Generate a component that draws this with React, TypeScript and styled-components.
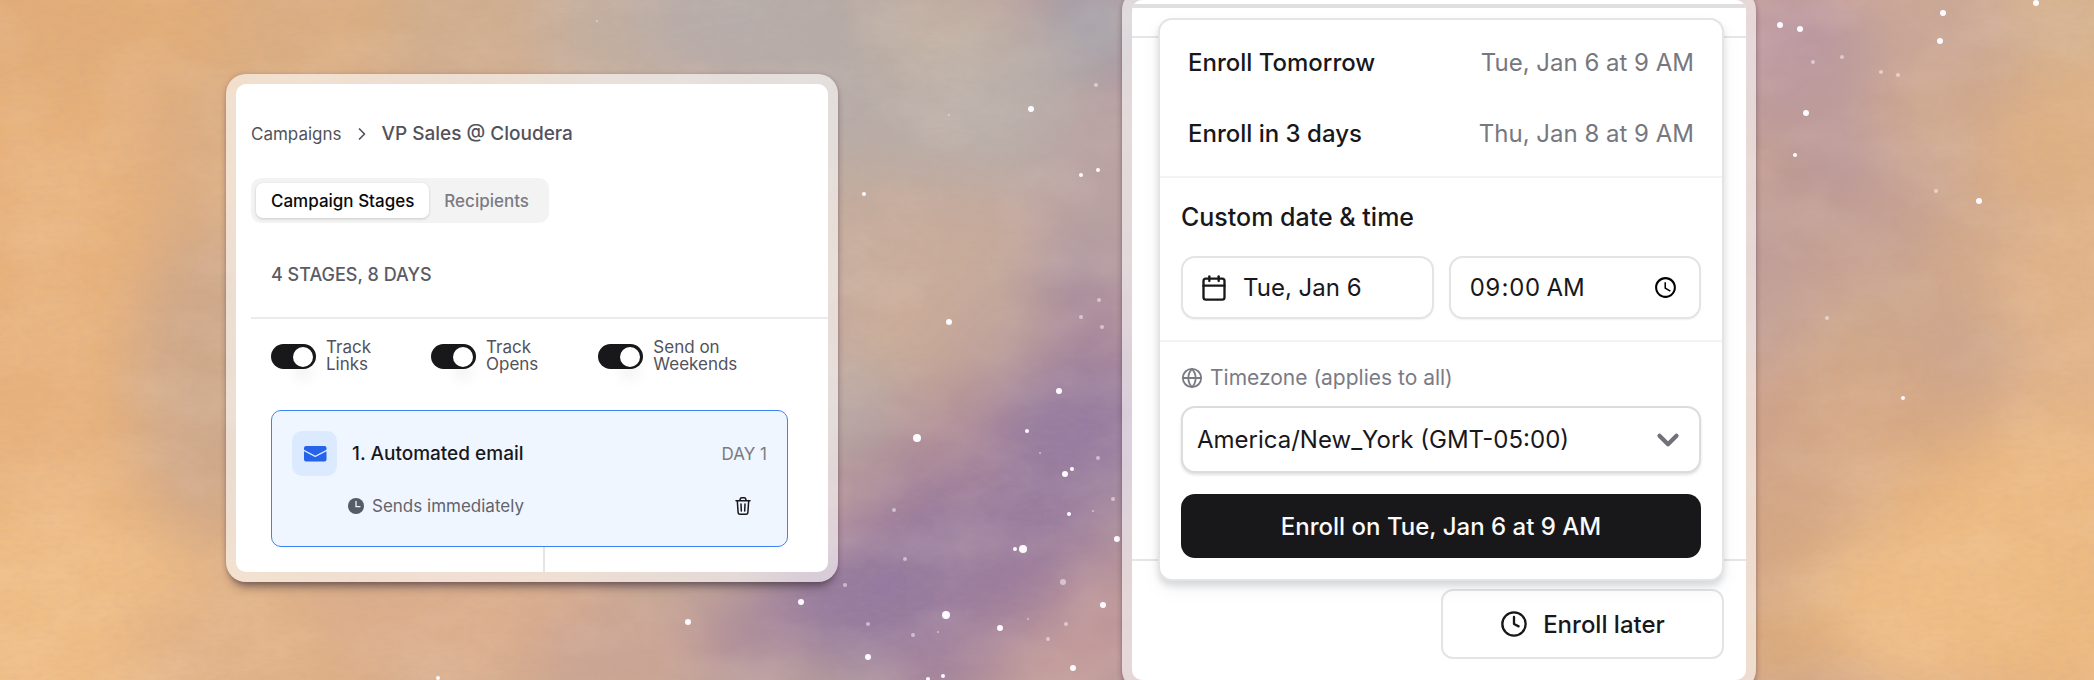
import React from 'react';
import styled, { createGlobalStyle } from 'styled-components';
import { Calendar, ChevronDown, ChevronRight, Clock, Globe } from 'lucide-react';

const GlobalStyle = createGlobalStyle`
  *, *::before, *::after { box-sizing: border-box; }
  body {
    margin: 0;
    font-family: Inter, "Liberation Sans", sans-serif;
    color: #18181b;
    background: #d9ad88;
  }
  button, input, select { font: inherit; color: inherit; margin: 0; }
`;

/* ---------- Painted sky ---------- */

type Wash = [x: number, y: number, rx: number, ry: number, color: string];
type Star = [x: number, y: number, r: number];

const washes: Wash[] = [
  [0, 340, 150, 420, '#e8b27c'],
  [330, 40, 180, 120, '#dbae82'],
  [480, 10, 90, 80, '#cfae8e'],
  [210, 380, 80, 150, '#cfa98a'],
  [60, 20, 170, 90, '#e2ad78'],
  [40, 620, 190, 110, '#efbe86'],
  [280, 640, 160, 60, '#e2b286'],
  [470, 620, 160, 70, '#dcae8c'],
  [500, 300, 240, 260, '#d2ae90'],
  [640, 30, 100, 90, '#c3afa0'],
  [740, 10, 100, 80, '#b7adaa'],
  [870, 110, 90, 80, '#b7aca8'],
  [850, 20, 60, 50, '#b5aba6'],
  [950, 30, 70, 50, '#c4b3a3'],
  [1000, 110, 90, 70, '#bab0aa'],
  [1095, 25, 50, 45, '#9fa2aa'],
  [870, 230, 90, 70, '#c2ad9e'],
  [950, 270, 120, 90, '#c7ab9b'],
  [1100, 190, 60, 90, '#b9a2a2'],
  [1065, 280, 40, 40, '#a68f9f'],
  [910, 350, 80, 60, '#ccad97'],
  [860, 430, 60, 70, '#b6a6a3'],
  [1000, 350, 70, 40, '#c0a39b'],
  [1100, 345, 60, 40, '#a9879a'],
  [960, 440, 70, 50, '#ac8794'],
  [1080, 430, 90, 70, '#977da0'],
  [860, 500, 70, 40, '#b18d97'],
  [990, 530, 120, 60, '#9a7d9e'],
  [880, 600, 120, 70, '#957a9f'],
  [740, 640, 70, 40, '#aa8a9c'],
  [620, 650, 90, 50, '#cba494'],
  [1000, 600, 80, 40, '#9b7d9c'],
  [1110, 610, 60, 50, '#bb9397'],
  [1060, 670, 80, 40, '#c69e9b'],
  [940, 680, 60, 30, '#a5829a'],
  [1500, 340, 300, 380, '#c2a09b'],
  [1790, 10, 70, 40, '#c59c9f'],
  [1810, 60, 90, 60, '#b795a2'],
  [1850, 140, 120, 90, '#bd9b9c'],
  [1790, 200, 60, 60, '#b8949a'],
  [1770, 170, 30, 40, '#c39c8c'],
  [1950, 30, 90, 60, '#c9a798'],
  [2070, 20, 70, 60, '#d5b290'],
  [1960, 120, 90, 70, '#cea78e'],
  [1880, 270, 110, 80, '#c5a092'],
  [1780, 330, 60, 60, '#c3a299'],
  [2070, 180, 90, 110, '#dfb184'],
  [1990, 270, 80, 80, '#d1a98b'],
  [1880, 350, 90, 60, '#cfa98c'],
  [2070, 330, 90, 110, '#e2b489'],
  [1960, 350, 60, 50, '#cca68d'],
  [1790, 440, 90, 80, '#cfa388'],
  [1890, 430, 90, 70, '#d5a885'],
  [1950, 500, 110, 50, '#e3b07d'],
  [2050, 520, 120, 100, '#ecba82'],
  [1800, 550, 90, 80, '#d4a784'],
  [1940, 610, 140, 90, '#efbe86'],
  [1780, 650, 70, 50, '#dcab7c'],
  [2060, 650, 90, 50, '#edb97f'],
];

const stars: Star[] = [
  [1031, 109, 3], [864, 194, 2], [949, 322, 3], [917, 438, 4], [1059, 391, 3],
  [1027, 431, 2], [1065, 474, 3], [1072, 469, 2], [1069, 514, 2], [1023, 549, 4],
  [1015, 549, 2], [1117, 539, 3], [946, 615, 4], [1000, 628, 3], [868, 657, 3],
  [1103, 605, 3], [1073, 668, 3], [1098, 170, 2], [1081, 175, 2], [801, 602, 3],
  [688, 622, 3], [438, 678, 2], [928, 679, 2], [943, 676, 2],
  [1780, 25, 3], [1800, 29, 3], [1943, 13, 3], [1940, 41, 3], [2036, 3, 3],
  [1806, 113, 3], [1795, 155, 2], [1979, 201, 3], [1903, 398, 2],
];

const dimStars: Star[] = [
  [1096, 85, 2], [894, 510, 2], [905, 559, 2], [913, 635, 2], [1098, 458, 2],
  [1099, 300, 2], [1102, 327, 2], [1081, 317, 2], [1066, 624, 2], [1048, 639, 2],
  [1063, 582, 3], [868, 624, 2], [845, 585, 2], [1113, 499, 2], [597, 21, 1],
  [949, 115, 1], [938, 632, 1], [1040, 453, 1], [1093, 511, 1], [1028, 619, 1],
  [1842, 57, 2], [1881, 72, 2], [1898, 75, 2], [1813, 62, 2], [1936, 191, 2], [1827, 318, 2],
];

const SkySvg = styled.svg`
  position: absolute;
  inset: 0;
  width: 100%;
  height: 100%;
`;

const Sky = () => (
  <SkySvg viewBox="0 0 2094 680" preserveAspectRatio="xMidYMid slice" aria-hidden="true">
    <defs>
      <linearGradient id="sky-base">
        <stop offset="0" stopColor="#e5b07c" />
        <stop offset="0.22" stopColor="#d2ac8c" />
        <stop offset="0.42" stopColor="#b7a2a0" />
        <stop offset="0.6" stopColor="#b596a0" />
        <stop offset="0.86" stopColor="#c7a194" />
        <stop offset="1" stopColor="#e4b484" />
      </linearGradient>
      <filter id="sky-soften" x="-20%" y="-20%" width="140%" height="140%">
        <feGaussianBlur stdDeviation="30" />
      </filter>
      <filter id="sky-twinkle" x="-5%" y="-5%" width="110%" height="110%">
        <feGaussianBlur stdDeviation="0.7" />
      </filter>
      <filter id="sky-paper" x="0" y="0" width="100%" height="100%">
        <feTurbulence type="fractalNoise" baseFrequency="0.09 0.2" numOctaves="4" seed="8" />
        <feColorMatrix values="0 0 0 0 0.5  0 0 0 0 0.34  0 0 0 0 0.3  1.1 0 0 0 -0.44" />
      </filter>
      <filter id="sky-light" x="0" y="0" width="100%" height="100%">
        <feTurbulence type="fractalNoise" baseFrequency="0.01 0.016" numOctaves="4" seed="3" />
        <feColorMatrix values="0 0 0 0 1  0 0 0 0 0.86  0 0 0 0 0.72  0 1.2 0 0 -0.48" />
      </filter>
    </defs>
    <rect width="2094" height="680" fill="url(#sky-base)" />
    <g filter="url(#sky-soften)">
      {washes.map(([x, y, rx, ry, color]) => (
        <ellipse key={`${x}-${y}`} cx={x} cy={y} rx={rx} ry={ry} fill={color} />
      ))}
    </g>
    <rect width="2094" height="680" filter="url(#sky-light)" opacity="0.22" />
    <rect width="2094" height="680" filter="url(#sky-paper)" opacity="0.22" />
    <g fill="#fdfbff" filter="url(#sky-twinkle)">
      {stars.map(([x, y, r]) => (
        <circle key={`${x}-${y}`} cx={x} cy={y} r={r} />
      ))}
      {dimStars.map(([x, y, r]) => (
        <circle key={`${x}-${y}`} cx={x} cy={y} r={r} opacity="0.5" />
      ))}
    </g>
  </SkySvg>
);

/* ---------- Page and frames ---------- */

const Page = styled.main`
  position: relative;
  display: grid;
  grid-template-columns: 226fr 612fr 284fr 634fr 338fr;
  align-items: start;
  min-height: 100vh;
  overflow: hidden;
`;

const Frame = styled.section<{ $column: number; $offset: number }>`
  position: relative;
  grid-column: ${(p) => p.$column};
  margin: ${(p) => p.$offset}px 0 ${(p) => Math.min(p.$offset, 0)}px;
  padding: 10px;
  border-radius: 20px;
  background: rgba(255, 255, 255, 0.6);
  box-shadow: 0 10px 10px -5px rgba(50, 40, 50, 0.5), 0 1px 5px rgba(90, 40, 70, 0.35);
`;

const Panel = styled.div`
  border-radius: 10px;
  background: #fff;
  overflow: hidden;
`;

/* ---------- Campaign panel ---------- */

const CampaignBody = styled(Panel)`
  padding: 38px 0 0 15px;
`;

const Breadcrumb = styled.nav`
  display: flex;
  align-items: center;
  gap: 10px;
  margin-bottom: 32px;
  line-height: 24px;
  color: #52525b;
`;

const CrumbLink = styled.a`
  font-size: 17px;
  color: inherit;
  text-decoration: none;
`;

const CrumbCurrent = styled.span`
  font-size: 19px;
  font-weight: 500;
`;

const Tabs = styled.div`
  display: flex;
  width: fit-content;
  padding: 5px;
  border-radius: 10px;
  background: #f3f3f4;
`;

const Tab = styled.button<{ $active?: boolean }>`
  height: 35px;
  padding: 0 15px;
  border: 0;
  border-radius: 7px;
  font-size: 17px;
  font-weight: 500;
  color: ${(p) => (p.$active ? '#09090b' : '#7b7b83')};
  background: ${(p) => (p.$active ? '#fff' : 'transparent')};
  box-shadow: ${(p) => (p.$active ? '0 1px 3px rgba(0, 0, 0, 0.18)' : 'none')};
`;

const Summary = styled.h2`
  margin: 0;
  padding: 40px 20px 30px;
  border-bottom: 2px solid #ebebec;
  font-size: 18px;
  font-weight: 500;
  line-height: 24px;
  color: #5b5b64;
`;

const Toggles = styled.div`
  display: flex;
  gap: 60px;
  padding: 20px 20px 37px;
`;

const ToggleLabel = styled.label`
  display: flex;
  align-items: center;
  gap: 10px;
  font-size: 17px;
  line-height: 17px;
  color: #52525b;
`;

const ToggleText = styled.span`
  width: min-content;
`;

const Switch = styled.input`
  appearance: none;
  flex: none;
  display: flex;
  justify-content: flex-end;
  width: 45px;
  height: 25px;
  padding: 3px;
  border-radius: 13px;
  background: #18181b;

  &:not(:checked) {
    justify-content: flex-start;
    background: #d4d4d8;
  }

  &::before {
    content: '';
    width: 20px;
    height: 20px;
    border-radius: 50%;
    background: #fff;
    box-shadow: 0 14px 14px rgba(0, 0, 0, 0.05);
  }
`;

const StageList = styled.div`
  padding: 0 40px 0 20px;
`;

const StageCard = styled.article`
  padding: 20px;
  border: 1px solid #3b82f6;
  border-radius: 10px;
  background: #eff6ff;
`;

const StageHeader = styled.div`
  display: flex;
  align-items: center;
  gap: 15px;
`;

const StageIcon = styled.span`
  display: grid;
  place-items: center;
  width: 45px;
  height: 45px;
  border-radius: 10px;
  background: #dbeafe;
`;

const StageTitle = styled.h3`
  flex: 1;
  margin: 0;
  font-size: 19px;
  font-weight: 500;
`;

const StageDay = styled.span`
  font-size: 17px;
  color: #7b7b7f;
`;

const StageFooter = styled.div`
  display: flex;
  align-items: center;
  gap: 8px;
  margin-top: 10px;
  padding-left: 56px;
  font-size: 17px;
  color: #63636b;
`;

const StageTiming = styled.span`
  flex: 1;
`;

const IconButton = styled.button`
  display: grid;
  place-items: center;
  width: 48px;
  height: 40px;
  padding: 0;
  border: 0;
  background: none;
  color: #18181b;
`;

const Connector = styled.div`
  width: 2px;
  height: 25px;
  margin-left: 272px;
  background: #e5e5e7;
`;

const EnvelopeIcon = () => (
  <svg width="24" height="18" viewBox="0 0 24 18" aria-hidden="true">
    <path
      fill="#2563eb"
      d="M1 6.2V14.500A2 2 0 0 0 3 16.500H21.500A2 2 0 0 0 23.500 14.500V6.200L13 11.700Q12.250 12.100 11.500 11.700ZM1 4.700V3A2 2 0 0 1 3 1H21.500A2 2 0 0 1 23.500 3V4.700L13 10.300Q12.250 10.700 11.500 10.300Z"
    />
  </svg>
);

const FilledClockIcon = () => (
  <svg width="16" height="16" viewBox="0 0 16 16" aria-hidden="true">
    <circle cx="8" cy="8" r="8" fill="#565b66" />
    <path d="M8 3.300V8.600H12" fill="none" stroke="#eff6ff" strokeWidth="1.300" strokeLinecap="round" />
  </svg>
);

const TrashIcon = () => (
  <svg width="16" height="20" viewBox="0 0 16 20" fill="none" stroke="currentColor" strokeWidth="1.500" strokeLinecap="round" strokeLinejoin="round" aria-hidden="true">
    <path d="M1 4.800H15M2.300 4.800 3.100 16.300Q3.200 18.300 5 18.300H11Q12.800 18.300 12.900 16.300L13.700 4.800M4.800 4.600Q5.300 1.800 6.700 1.800H9.300Q10.700 1.800 11.200 4.600M6 8 6.300 15M10 8 9.700 15" />
  </svg>
);

const toggles = ['Track Links', 'Track Opens', 'Send on Weekends'];

const CampaignPanel = () => (
  <CampaignBody>
    <Breadcrumb aria-label="Breadcrumb">
      <CrumbLink href="#campaigns">Campaigns</CrumbLink>
      <ChevronRight size={20} aria-hidden="true" />
      <CrumbCurrent>VP Sales @ Cloudera</CrumbCurrent>
    </Breadcrumb>
    <Tabs role="tablist">
      <Tab $active type="button" role="tab" aria-selected="true">Campaign Stages</Tab>
      <Tab type="button" role="tab" aria-selected="false">Recipients</Tab>
    </Tabs>
    <Summary>4 STAGES, 8 DAYS</Summary>
    <Toggles>
      {toggles.map((name) => (
        <ToggleLabel key={name}>
          <Switch type="checkbox" role="switch" defaultChecked />
          <ToggleText>{name}</ToggleText>
        </ToggleLabel>
      ))}
    </Toggles>
    <StageList>
      <StageCard>
        <StageHeader>
          <StageIcon><EnvelopeIcon /></StageIcon>
          <StageTitle>1. Automated email</StageTitle>
          <StageDay>DAY 1</StageDay>
        </StageHeader>
        <StageFooter>
          <FilledClockIcon />
          <StageTiming>Sends immediately</StageTiming>
          <IconButton type="button" aria-label="Delete stage"><TrashIcon /></IconButton>
        </StageFooter>
      </StageCard>
      <Connector />
    </StageList>
  </CampaignBody>
);

/* ---------- Enrollment panel ---------- */

const EnrollTop = styled.div`
  height: 8px;
  border-bottom: 4px solid #dfdfe1;
`;

const EnrollHeader = styled.div`
  height: 30px;
  border-bottom: 2px solid #e6e6e8;
`;

const EnrollContent = styled.div`
  min-height: 521px;
`;

const EnrollFooter = styled.footer`
  padding: 28px 22px 21px 26px;
  border-top: 2px solid #e6e6e8;
`;

const PopoverAnchor = styled.div`
  position: relative;
  display: flex;
  justify-content: flex-end;
`;

const OutlineButton = styled.button`
  display: flex;
  align-items: center;
  justify-content: center;
  gap: 15px;
  width: 50%;
  height: 70px;
  padding: 0;
  border: 2px solid #e4e4e7;
  border-radius: 12px;
  background: #fff;
  font-size: 24px;
  font-weight: 500;
`;

const Popover = styled.form`
  position: absolute;
  bottom: calc(100% + 8px);
  left: 0;
  right: 0;
  border: 2px solid #e4e4e7;
  border-radius: 14px;
  background: #fff;
  box-shadow: 0 5px 6px rgba(30, 40, 60, 0.14), 0 8px 20px rgba(0, 0, 0, 0.05);
`;

const QuickOptions = styled.div`
  padding: 7px 0;
`;

const QuickOption = styled.button`
  display: flex;
  align-items: center;
  justify-content: space-between;
  width: 100%;
  height: 71px;
  padding: 0 28px;
  border: 0;
  background: none;
  font-size: 24px;
  font-weight: 500;
`;

const QuickTime = styled.span`
  font-weight: 400;
  color: #777780;
`;

const PopoverSection = styled.div`
  padding: 21px;
  border-top: 2px solid #f3f3f4;
`;

const SectionTitle = styled.h3`
  margin: 3px 0 24px;
  font-size: 25px;
  font-weight: 500;
  line-height: 30px;
`;

const FieldRow = styled.div`
  display: grid;
  grid-template-columns: 1fr 1fr;
  gap: 15px;
`;

const fieldHeight = 63;

const DateButton = styled.button`
  display: flex;
  align-items: center;
  gap: 15px;
  height: ${fieldHeight}px;
  padding: 0 17px;
  border: 2px solid #e4e4e7;
  border-radius: 14px;
  background: #fff;
  box-shadow: 0 1px 2px rgba(0, 0, 0, 0.06);
  font-size: 24px;
`;

const TimeInput = styled.input`
  width: 100%;
  height: ${fieldHeight}px;
  padding: 0 18px;
  border: 2px solid #e4e4e7;
  border-radius: 14px;
  background: #fff;
  box-shadow: 0 1px 2px rgba(0, 0, 0, 0.06);
  font-size: 24px;
  font-variant-numeric: tabular-nums;
  outline: none;
`;

const ZoneLabel = styled.label`
  display: flex;
  align-items: center;
  gap: 7px;
  margin: 1px 0 14px;
  font-size: 21px;
  line-height: 28px;
  color: #7b7b84;
`;

const SelectBox = styled.div`
  position: relative;
  margin-bottom: 21px;
`;

const SelectChevron = styled(ChevronDown)`
  position: absolute;
  top: 17px;
  right: 16px;
  color: #71717a;
  pointer-events: none;
`;

const ZoneSelect = styled.select`
  appearance: none;
  display: block;
  width: 100%;
  height: 67px;
  padding: 0 50px 0 14px;
  border: 2px solid #dcdcdf;
  border-radius: 14px;
  background: #fff;
  box-shadow: 0 2px 3px rgba(0, 0, 0, 0.12);
  font-size: 24px;
`;

const SubmitButton = styled.button`
  display: block;
  width: 100%;
  height: 64px;
  border: 0;
  border-radius: 14px;
  background: #18181b;
  color: #fafafa;
  font-size: 24px;
  font-weight: 500;
`;

const EnrollPanel = () => (
  <Panel>
    <EnrollTop />
    <EnrollHeader />
    <EnrollContent />
    <EnrollFooter>
      <PopoverAnchor>
        <OutlineButton type="button">
          <Clock size={28} aria-hidden="true" />
          Enroll later
        </OutlineButton>
        <Popover>
          <QuickOptions>
            <QuickOption type="button">
              Enroll Tomorrow <QuickTime>Tue, Jan 6 at 9 AM</QuickTime>
            </QuickOption>
            <QuickOption type="button">
              Enroll in 3 days <QuickTime>Thu, Jan 8 at 9 AM</QuickTime>
            </QuickOption>
          </QuickOptions>
          <PopoverSection>
            <SectionTitle>Custom date &amp; time</SectionTitle>
            <FieldRow>
              <DateButton type="button">
                <Calendar size={28} aria-hidden="true" />
                Tue, Jan 6
              </DateButton>
              <TimeInput type="time" aria-label="Time" defaultValue="09:00" />
            </FieldRow>
          </PopoverSection>
          <PopoverSection>
            <ZoneLabel htmlFor="timezone">
              <Globe size={22} aria-hidden="true" />
              Timezone (applies to all)
            </ZoneLabel>
            <SelectBox>
              <ZoneSelect id="timezone" defaultValue="ny">
                <option value="ny">America/New_York (GMT-05:00)</option>
              </ZoneSelect>
              <SelectChevron size={34} strokeWidth={3} aria-hidden="true" />
            </SelectBox>
            <SubmitButton type="button">Enroll on Tue, Jan 6 at 9 AM</SubmitButton>
          </PopoverSection>
        </Popover>
      </PopoverAnchor>
    </EnrollFooter>
  </Panel>
);

export default function App() {
  return (
    <>
      <GlobalStyle />
      <Page>
        <Sky />
        <Frame $column={2} $offset={74}>
          <CampaignPanel />
        </Frame>
        <Frame $column={4} $offset={-10}>
          <EnrollPanel />
        </Frame>
      </Page>
    </>
  );
}
